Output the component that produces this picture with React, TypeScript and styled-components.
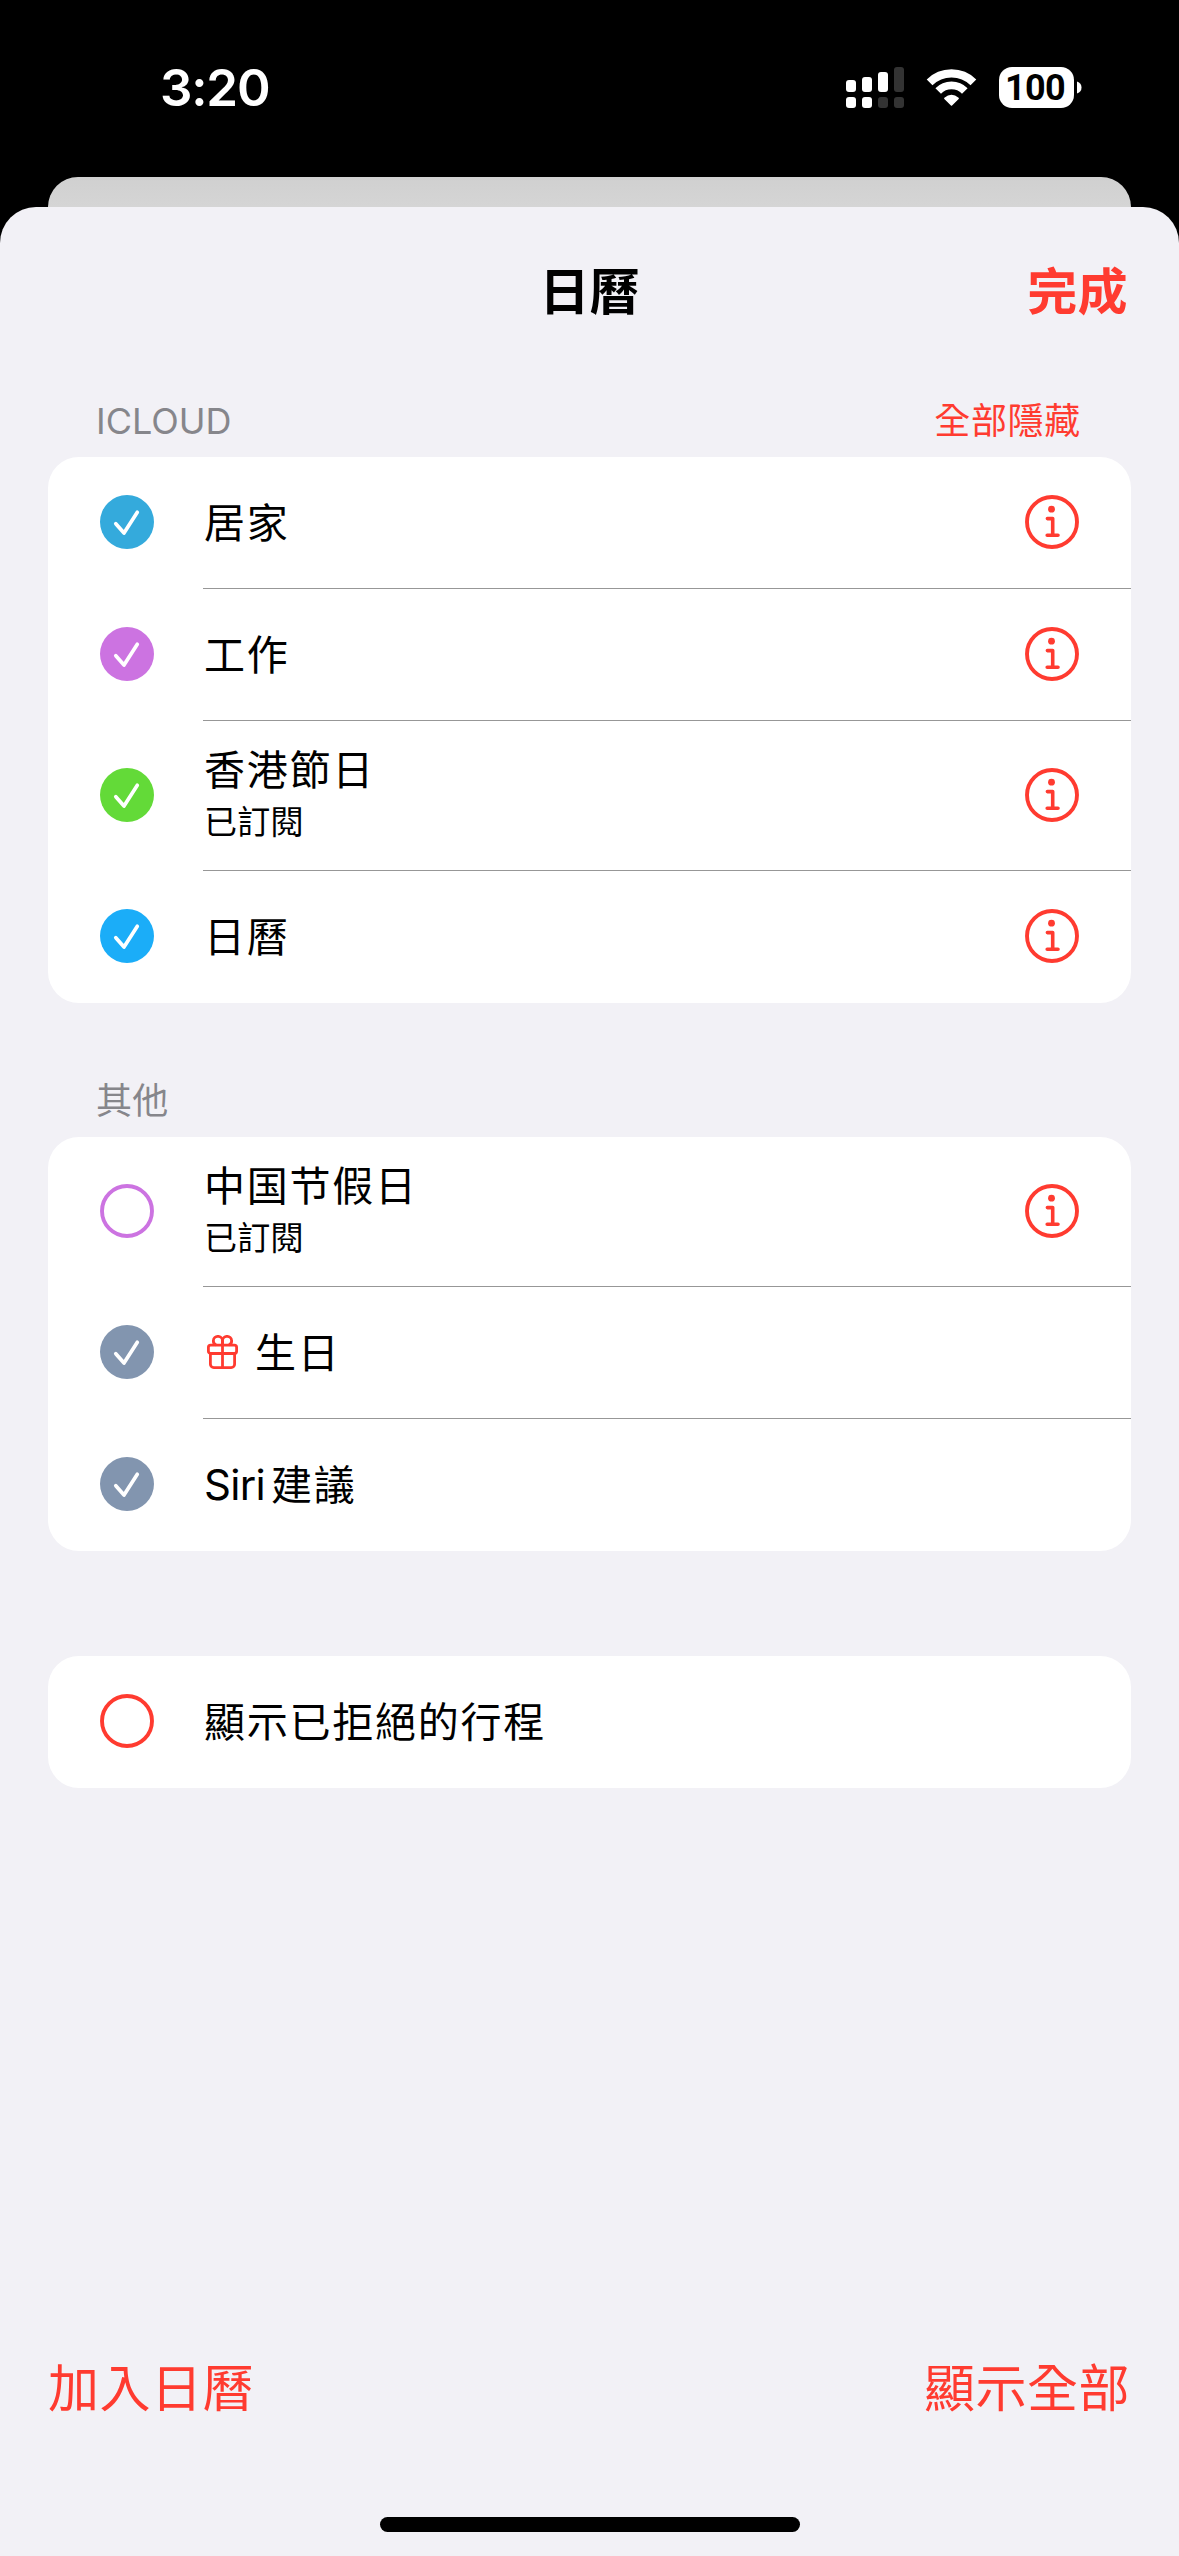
import React from "react";
import styled, { createGlobalStyle } from "styled-components";

const RED = "#ff3b30";

const GlobalStyle = createGlobalStyle`
  * { box-sizing: border-box; }
  body {
    margin: 0;
    background: #000;
    font-family: Inter, "Noto Sans CJK TC", sans-serif;
  }
`;

const Screen = styled.div`
  width: 1179px;
  height: 2556px;
  display: flex;
  flex-direction: column;
  background: #000;
  overflow: hidden;
`;

const StatusBar = styled.header`
  flex: none;
  height: 177px;
  padding: 67px 97px 0 160px;
  display: flex;
  justify-content: space-between;
  align-items: flex-start;
  color: #fff;
`;

const Clock = styled.span`
  font-size: 51px;
  font-weight: 600;
  line-height: 42px;
  letter-spacing: -1.2px;
`;

const StatusIcons = styled.div`
  display: flex;
  align-items: flex-start;
  gap: 22px;
  height: 41px;
`;

const Battery = styled.div`
  display: flex;
  align-items: center;
  gap: 3px;
`;

const BatteryBody = styled.div`
  width: 75px;
  height: 41px;
  border-radius: 13px;
  background: #fff;
  color: #000;
  font-family: Roboto, sans-serif;
  font-size: 36px;
  font-weight: 700;
  line-height: 42px;
  letter-spacing: -0.6px;
  text-indent: -3px;
  text-align: center;
`;

const BackCard = styled.div`
  flex: none;
  height: 30px;
  margin: 0 48px;
  border-radius: 30px 30px 0 0;
  background: linear-gradient(#d0d0d0, #d5d5d5);
`;

const Sheet = styled.main`
  flex: 1;
  display: flex;
  flex-direction: column;
  border-radius: 36px 36px 0 0;
  background: #f2f1f6;
`;

const NavBar = styled.div`
  height: 168px;
  padding: 2px 51px 0;
  display: grid;
  grid-template-columns: 1fr auto 1fr;
  align-items: center;
  margin-bottom: 8px;
`;

const Title = styled.h1`
  grid-column: 2;
  margin: 0;
  font-size: 50px;
  font-weight: 600;
  line-height: 60px;
  color: #000;
`;

const TextButton = styled.button<{ $size: number; $weight?: number; $track?: number }>`
  border: 0;
  padding: 0;
  background: none;
  font-family: inherit;
  justify-self: end;
  font-size: ${(p) => p.$size}px;
  font-weight: ${(p) => p.$weight ?? 400};
  letter-spacing: ${(p) => p.$track ?? 0}px;
  line-height: 60px;
  color: ${RED};
`;

const Section = styled.section<{ $gap: number }>`
  margin: ${(p) => p.$gap}px 48px 0;
`;

const SectionHeader = styled.div`
  height: 74px;
  padding: 1px 50px 0 48px;
  display: flex;
  align-items: center;
  justify-content: space-between;
`;

const SectionName = styled.h2<{ $track: number }>`
  margin: 0;
  font-size: 36px;
  font-weight: 400;
  line-height: 44px;
  letter-spacing: ${(p) => p.$track}px;
  color: #86868b;
`;

const Card = styled.ul`
  list-style: none;
  margin: 0;
  padding: 0;
  border-radius: 31px;
  background: #fff;
  overflow: hidden;
`;

const Row = styled.li<{ $tall?: boolean }>`
  height: ${(p) => (p.$tall ? 150 : 132)}px;
  padding-left: 52px;
  display: flex;
  align-items: stretch;
`;

const Toggle = styled.div`
  width: 103px;
  padding-bottom: 1.5px;
  display: flex;
  align-items: center;
`;

const RowBody = styled.div<{ $line: boolean }>`
  flex: 1;
  padding: 0 52px 0.5px 1px;
  display: flex;
  align-items: center;
  justify-content: space-between;
  border-bottom: 1px solid ${(p) => (p.$line ? "#979797" : "transparent")};
`;

const Labels = styled.div<{ $single: boolean }>`
  display: flex;
  flex-direction: column;
  gap: 1px;
  padding-top: ${(p) => (p.$single ? 2 : 0)}px;
  padding-bottom: ${(p) => (p.$single ? 0 : 2)}px;
`;

const Name = styled.div`
  display: flex;
  align-items: center;
  font-size: 41px;
  line-height: 54px;
  letter-spacing: 1.75px;
  color: #000;
`;

const Latin = styled.span`
  font-size: 42px;
  letter-spacing: -0.7px;
  margin-right: 6px;
`;

const Detail = styled.div`
  font-size: 33px;
  line-height: 48px;
  letter-spacing: 0.2px;
  color: #000;
`;

const GiftSlot = styled.span`
  display: flex;
  margin: 0 17px 3px 3px;
`;

const Footer = styled.footer`
  margin-top: auto;
  padding: 0 49px 0 48px;
  display: flex;
  justify-content: space-between;
`;

const HomeIndicator = styled.div`
  width: 420px;
  height: 15px;
  margin: 98px auto 24px;
  border-radius: 8px;
  background: #000;
`;

const SignalIcon = () => (
  <svg width="58" height="41" viewBox="0 0 58 41" fill="#fff">
    <rect x="0" y="13" width="10" height="12" rx="3" />
    <rect x="16" y="10" width="10" height="15" rx="3" />
    <rect x="32" y="5" width="10" height="20" rx="3" />
    <rect x="48" y="0" width="10" height="25" rx="3" fill="#333" />
    <rect x="0" y="30" width="10" height="11" rx="3" />
    <rect x="16" y="30" width="10" height="11" rx="3" />
    <rect x="32" y="30" width="10" height="11" rx="3" fill="#333" />
    <rect x="48" y="30" width="10" height="11" rx="3" fill="#333" />
  </svg>
);

const WifiIcon = () => (
  <svg width="51" height="41" viewBox="0 -1 51 41" fill="none" stroke="#fff">
    <path d="M3.6 14.3A31.2 31.2 0 0 1 47.4 14.3" strokeWidth="8.2" />
    <path d="M12.2 23A18.6 18.6 0 0 1 38.8 23" strokeWidth="7.8" />
    <path
      d="M18.9 30.4Q25.5 24.6 32.1 30.4L25.5 37Z"
      fill="#fff"
      strokeWidth="1.6"
      strokeLinejoin="round"
    />
  </svg>
);

const CheckIcon = ({ color }: { color: string }) => (
  <svg width="54" height="54" viewBox="0 0 54 54" fill="none">
    <circle cx="27" cy="27" r="27" fill={color} />
    <path
      d="M15.8 28.7L24 38L37.3 17.2"
      stroke="#fff"
      strokeWidth="3.7"
      strokeLinecap="round"
      strokeLinejoin="round"
    />
  </svg>
);

const RingIcon = ({ color }: { color: string }) => (
  <svg width="54" height="54" viewBox="0 0 54 54" fill="none">
    <circle cx="27" cy="27" r="25" stroke={color} strokeWidth="3.9" />
  </svg>
);

const InfoIcon = () => (
  <svg width="54" height="54" viewBox="0 0 54 54" fill="none" stroke={RED}>
    <circle cx="27" cy="27" r="25" strokeWidth="3.9" />
    <circle cx="26.5" cy="14.2" r="3.4" fill={RED} stroke="none" />
    <path
      d="M22.4 23.6H27.7V40.2M22.2 40.2H33"
      strokeWidth="3.6"
      strokeLinecap="round"
      strokeLinejoin="round"
    />
  </svg>
);

const GiftIcon = () => (
  <svg width="31" height="34" viewBox="0 0 31 34" fill="none" stroke={RED} strokeWidth="2.8">
    <rect x="1.4" y="10.1" width="28.2" height="8.4" rx="2.2" />
    <path d="M3.4 18.5V29.2A3.4 3.4 0 0 0 6.8 32.6H24.2A3.4 3.4 0 0 0 27.6 29.2V18.5" />
    <path d="M15.5 5.4V32.6" />
    <path d="M15.5 10V5.4A4.35 4.35 0 0 0 10.9 1.4A4.35 4.35 0 0 0 6.4 5.5A4.3 4.3 0 0 0 9.2 10" />
    <path d="M15.5 10V5.4A4.35 4.35 0 0 1 20.1 1.4A4.35 4.35 0 0 1 24.6 5.5A4.3 4.3 0 0 1 21.8 10" />
  </svg>
);

type Entry = {
  name: string;
  latin?: string;
  color: string;
  checked: boolean;
  detail?: string;
  info?: boolean;
  gift?: boolean;
};

const icloud: Entry[] = [
  { name: "居家", color: "#34aadc", checked: true, info: true },
  { name: "工作", color: "#cc73e1", checked: true, info: true },
  { name: "香港節日", color: "#63da38", checked: true, info: true, detail: "已訂閱" },
  { name: "日曆", color: "#1badf8", checked: true, info: true },
];

const others: Entry[] = [
  { name: "中国节假日", color: "#cc73e1", checked: false, info: true, detail: "已訂閱" },
  { name: "生日", color: "#8295af", checked: true, gift: true },
  { name: "建議", latin: "Siri", color: "#8295af", checked: true },
];

const declined: Entry[] = [{ name: "顯示已拒絕的行程", color: RED, checked: false }];

const CalendarCard = ({ entries }: { entries: Entry[] }) => (
  <Card>
    {entries.map((e, i) => (
      <Row key={e.name} $tall={!!e.detail}>
        <Toggle>{e.checked ? <CheckIcon color={e.color} /> : <RingIcon color={e.color} />}</Toggle>
        <RowBody $line={i < entries.length - 1}>
          <Labels $single={!e.detail}>
            <Name>
              {e.gift && (
                <GiftSlot>
                  <GiftIcon />
                </GiftSlot>
              )}
              {e.latin && <Latin>{e.latin}</Latin>}
              {e.name}
            </Name>
            {e.detail && <Detail>{e.detail}</Detail>}
          </Labels>
          {e.info && <InfoIcon />}
        </RowBody>
      </Row>
    ))}
  </Card>
);

export default function App() {
  return (
    <>
      <GlobalStyle />
      <Screen lang="zh-Hant">
        <StatusBar>
          <Clock>3:20</Clock>
          <StatusIcons>
            <SignalIcon />
            <WifiIcon />
            <Battery>
              <BatteryBody>100</BatteryBody>
              <svg width="5" height="13" viewBox="0 0 5 13">
                <path d="M0 0.5Q4.5 2 4.5 6.5T0 12.5Z" fill="#fff" />
              </svg>
            </Battery>
          </StatusIcons>
        </StatusBar>
        <BackCard />
        <Sheet>
          <NavBar>
            <Title>日曆</Title>
            <TextButton $size={50} $weight={600} $track={0.4}>完成</TextButton>
          </NavBar>
          <Section $gap={0}>
            <SectionHeader>
              <SectionName $track={0}>ICLOUD</SectionName>
              <TextButton $size={36} $track={0.7}>全部隱藏</TextButton>
            </SectionHeader>
            <CalendarCard entries={icloud} />
          </Section>
          <Section $gap={60}>
            <SectionHeader>
              <SectionName $track={0.3}>其他</SectionName>
            </SectionHeader>
            <CalendarCard entries={others} />
          </Section>
          <Section $gap={105}>
            <CalendarCard entries={declined} />
          </Section>
          <Footer>
            <TextButton $size={51} $track={0.5}>加入日曆</TextButton>
            <TextButton $size={51} $track={0.5}>顯示全部</TextButton>
          </Footer>
          <HomeIndicator />
        </Sheet>
      </Screen>
    </>
  );
}
